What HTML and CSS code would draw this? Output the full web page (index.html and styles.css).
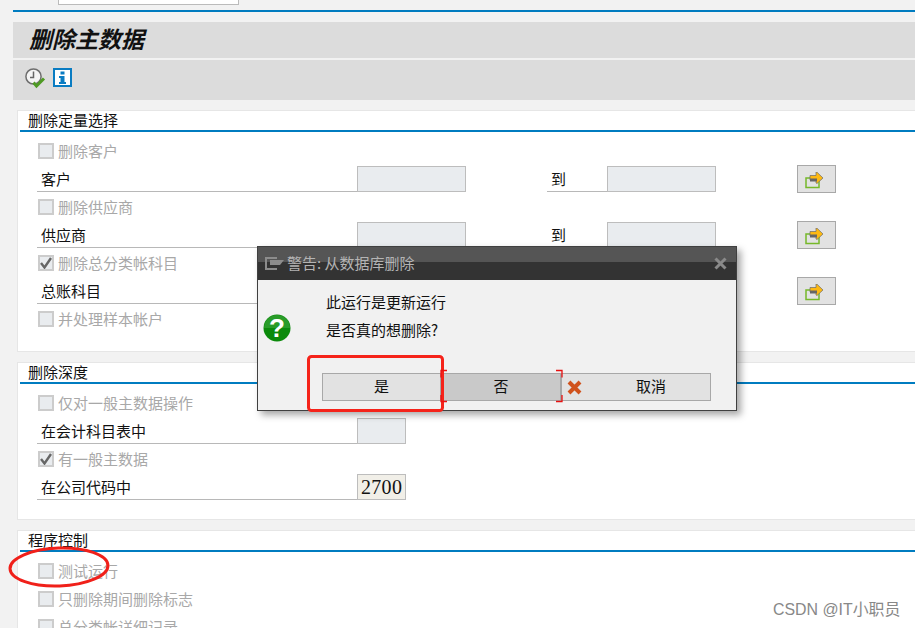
FILE: index.html
```html
<!DOCTYPE html>
<html lang="zh">
<head>
<meta charset="utf-8">
<title>删除主数据</title>
<link rel="stylesheet" href="styles.css">
</head>
<body>
<div class="page">
  <div class="topbar"><div class="top-input"></div></div>
  <div class="rule"></div>
  <h1 class="title">删除主数据</h1>
  <div class="toolbar">
    <svg class="tool-clock" width="21" height="21" viewBox="0 0 21 21">
      <circle cx="8.500" cy="8.500" r="7.600" fill="#f4f4f4" stroke="#6e6e6e" stroke-width="1.500"/>
      <path d="M8.500 3.500v6H5" fill="none" stroke="#666" stroke-width="1.500"/>
      <path d="M8.500 14.500l3 3.500L19 10.500" fill="none" stroke="#4f9a24" stroke-width="3"/>
    </svg>
    <svg class="tool-info" width="19" height="19" viewBox="0 0 19 19">
      <rect x="1" y="1" width="17" height="17" fill="#fff" stroke="#0a7cc2" stroke-width="2"/>
      <rect x="7.500" y="3.500" width="4" height="3" fill="#0a7cc2"/>
      <path d="M6 8h5.500v6H13v2H6v-2h1.500V10H6z" fill="#0a7cc2"/>
    </svg>
  </div>

  <section class="group first">
    <h2 class="group-title">删除定量选择</h2>
    <div class="rows">
      <div class="row"><span class="check"></span><span class="check-label">删除客户</span></div>
      <div class="row">
        <span class="field-label">客户</span><span class="input"></span>
        <span class="to-label">到</span><span class="input"></span>
        <button class="multi"><svg class="multi-icon" width="20" height="17" viewBox="0 0 20 17"><use href="#arrow"/></svg></button>
      </div>
      <div class="row"><span class="check"></span><span class="check-label">删除供应商</span></div>
      <div class="row">
        <span class="field-label">供应商</span><span class="input"></span>
        <span class="to-label">到</span><span class="input"></span>
        <button class="multi"><svg class="multi-icon" width="20" height="17" viewBox="0 0 20 17"><use href="#arrow"/></svg></button>
      </div>
      <div class="row"><span class="check on"><svg width="12" height="12" viewBox="0 0 12 12"><path d="M1 6l3.500 4.500L11 1" fill="none" stroke="#666" stroke-width="2.400"/></svg></span><span class="check-label">删除总分类帐科目</span></div>
      <div class="row">
        <span class="field-label">总账科目</span><span class="input"></span>
        <span class="to-label">到</span><span class="input"></span>
        <button class="multi"><svg class="multi-icon" width="20" height="17" viewBox="0 0 20 17"><use href="#arrow"/></svg></button>
      </div>
      <div class="row"><span class="check"></span><span class="check-label">并处理样本帐户</span></div>
    </div>
  </section>

  <section class="group second">
    <h2 class="group-title">删除深度</h2>
    <div class="rows">
      <div class="row"><span class="check"></span><span class="check-label">仅对一般主数据操作</span></div>
      <div class="row"><span class="field-label">在会计科目表中</span><span class="input short"></span></div>
      <div class="row"><span class="check on"><svg width="12" height="12" viewBox="0 0 12 12"><path d="M1 6l3.500 4.500L11 1" fill="none" stroke="#666" stroke-width="2.400"/></svg></span><span class="check-label">有一般主数据</span></div>
      <div class="row"><span class="field-label">在公司代码中</span><span class="input short value">2700</span></div>
    </div>
  </section>

  <section class="group third">
    <h2 class="group-title">程序控制</h2>
    <div class="rows">
      <div class="row"><span class="check"></span><span class="check-label">测试运行</span></div>
      <div class="row"><span class="check"></span><span class="check-label">只删除期间删除标志</span></div>
      <div class="row"><span class="check"></span><span class="check-label">总分类帐详细记录</span></div>
    </div>
  </section>

  <div class="dialog">
    <div class="dialog-head">
      <svg width="19" height="13" viewBox="0 0 19 13"><path d="M12 1H1v11h11" fill="none" stroke="#8c8c8c" stroke-width="2"/><path d="M5 3h9l5 0-4 5H5z" fill="#8c8c8c"/></svg>
      <span class="dialog-title">警告: 从数据库删除</span>
      <svg class="dialog-close" width="13" height="13" viewBox="0 0 13 13"><path d="M1.500 1.500l10 10M11.500 1.500l-10 10" stroke="#8a8a8a" stroke-width="3"/></svg>
    </div>
    <div class="dialog-body">
      <div class="dialog-msg">
        <svg class="q-icon" width="28" height="28" viewBox="0 0 28 28">
          <circle cx="14" cy="14" r="13.500" fill="#0b8a0b"/>
          <path d="M1 14a13 13 0 0 1 26 0z" fill="#3ea83e" opacity=".6"/>
          <text class="q-mark" x="14" y="23" text-anchor="middle">?</text>
        </svg>
        <div class="msg-lines">
          <p class="msg-line">此运行是更新运行</p>
          <p class="msg-line">是否真的想删除?</p>
        </div>
      </div>
      <div class="dialog-btns">
        <button class="btn yes"><span class="btn-text">是</span></button>
        <button class="btn no"><span class="btn-text">否</span></button>
        <button class="btn cancel">
          <svg class="x-icon" width="15" height="15" viewBox="0 0 15 15"><path d="M2 2l11 11M13 2L2 13" stroke="#d0521c" stroke-width="4"/></svg>
          <span class="btn-text cancel-text">取消</span>
        </button>
      </div>
    </div>
  </div>

  <svg class="marks" width="915" height="628" viewBox="0 0 915 628">
    <rect x="308.500" y="356.500" width="134" height="54" rx="3" fill="none" stroke="#f5231a" stroke-width="3"/>
    <path d="M447 370.500h-6v7M441 395v6.500h6M556 370.500h6v7M562 395v6.500h-6" fill="none" stroke="#e81010" stroke-width="1.300"/>
    <ellipse cx="59" cy="567" rx="49" ry="19" transform="rotate(-2 59 567)" fill="none" stroke="#f0201a" stroke-width="3"/>
  </svg>
  <div class="watermark">CSDN @IT小职员</div>

  <svg class="defs" width="0" height="0">
    <defs>
      <g id="arrow">
        <rect x="1" y="6" width="13" height="9.500" fill="none" stroke="#76b82a" stroke-width="1.500"/>
        <path d="M5 3.500h6V0l1 .2 6 5.800-6 5.500-1-.5V8H5z" fill="#fdb913" stroke="#6b6b6b" stroke-width=".7"/>
        <rect x="5" y="6.500" width="7" height="3" fill="#666"/>
      </g>
    </defs>
  </svg>
</div>
</body>
</html>
```

FILE: styles.css
```css
* { box-sizing: border-box; }
html, body { margin: 0; padding: 0; }
body { background: #f2f2f2; font-family: "Noto Sans CJK SC", "Liberation Sans", sans-serif; font-size: 15px; color: #111; }
.page { position: relative; width: 915px; height: 628px; overflow: hidden; }

.topbar { height: 10px; padding-left: 58px; }
.top-input { width: 181px; height: 5px; background: #fff; border: 1px solid #bbb; border-top: 0; }
.rule { height: 2px; margin-left: 13px; background: #007cc0; }

.title { margin: 10px 0 0 13px; height: 36px; padding-left: 16px; background: #dcdcdc; font-size: 23px; line-height: 33px; font-weight: 700; font-style: italic; color: #111; }
.toolbar { margin: 2px 0 0 13px; height: 40px; padding: 8px 0 0 12px; background: #dcdcdc; display: flex; align-items: flex-start; gap: 7px; }

.group { margin-left: 17px; background: #fff; border: 1px solid #e6e6e6; border-right: 0; padding-left: 2px; }
.first { margin-top: 10px; height: 242px; }
.second { margin-top: 10px; height: 158px; }
.third { margin-top: 10px; height: 120px; }
.group-title { margin: 0; height: 21px; padding-left: 8px; border-bottom: 2px solid #007cc0; font-size: 15px; font-weight: 400; line-height: 17px; color: #111; }
.rows { padding: 5px 0 0 18px; }
.row { display: flex; align-items: center; height: 28px; }

.check { display: flex; align-items: center; justify-content: center; flex: none; width: 16px; height: 16px; background: #e9ecef; border: 2px solid #ccc; }
.check-label { margin-left: 4px; padding-bottom: 2px; color: #a8a8a8; }

.field-label { width: 320px; height: 26px; margin-left: -1px; padding-left: 4px; border-bottom: 1px solid #b8b8b8; line-height: 25px; flex: none; }
.input { flex: none; width: 109px; height: 26px; background: #e9ecef; border: 1px solid #bdbdbd; }
.input.short { width: 49px; }
.value { background: #f1efe8; font-family: "Liberation Serif", serif; font-size: 20px; line-height: 24px; padding-left: 3px; letter-spacing: .3px; }
.to-label { width: 60px; height: 26px; margin-left: 81px; padding-left: 4px; border-bottom: 1px solid #b8b8b8; line-height: 25px; flex: none; }
.multi { width: 39px; height: 28px; margin-left: 81px; padding: 0 3px 0 0; display: flex; align-items: center; justify-content: center; background: #e2e2e2; border: 1px solid #a8a8a8; }
.multi-icon { margin-top: 3px; }

.dialog { position: absolute; left: 257px; top: 246px; width: 480px; height: 165px; background: #f1f1f1; border: 1px solid #404040; box-shadow: 4px 4px 7px rgba(0,0,0,.35); }
.dialog-head { display: flex; align-items: center; height: 33px; padding: 0 9px 0 7px; background: linear-gradient(#555 0, #555 15px, #333 15px, #333 100%); }
.dialog-title { margin-left: 3px; padding-bottom: 3px; font-size: 15px; color: #b4b4b4; flex: 1; }
.dialog-body { padding-top: 9px; }
.dialog-msg { display: flex; align-items: flex-start; padding-left: 5px; }
.q-icon { margin-top: 25px; flex: none; }
.q-mark { font-family: "Liberation Sans", sans-serif; font-size: 26px; font-weight: 700; fill: #fff; }
.msg-lines { margin-left: 35px; }
.msg-line { margin: 0; height: 28px; line-height: 25px; }
.dialog-btns { display: flex; margin: 28px 0 0 64px; }
.btn { height: 28px; padding: 0; background: #e2e2e2; border: 1px solid #a8a8a8; font: inherit; color: #111; }
.btn-text { display: block; margin-top: -4px; }
.yes { width: 119px; }
.no { width: 120px; background: #c9c9c9; }
.cancel { width: 150px; display: flex; align-items: center; padding-left: 5px; }
.cancel-text { margin-left: 54px; }
.x-icon { flex: none; }

.marks { position: absolute; left: 0; top: 0; pointer-events: none; }
.watermark { position: absolute; left: 773px; top: 598px; font-family: "Liberation Sans", "Noto Sans CJK SC", sans-serif; font-size: 15.900px; line-height: 24px; color: #888; white-space: nowrap; }
.defs { position: absolute; }
```
